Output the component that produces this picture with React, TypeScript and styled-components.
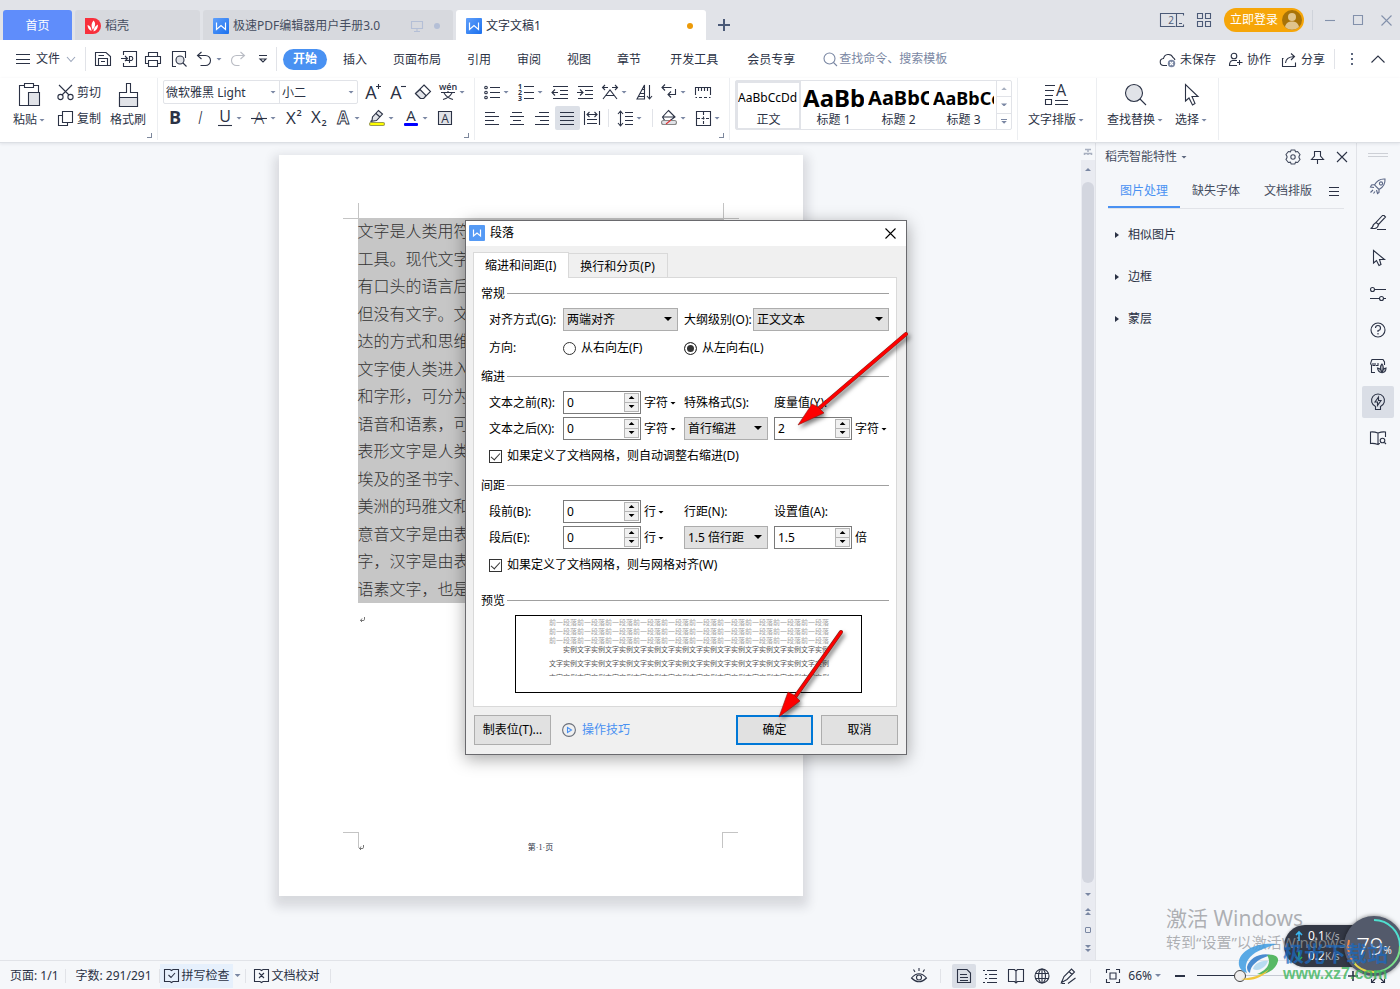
import React from "react";
import styled, { createGlobalStyle, css } from "styled-components";

const ink = "#2b3245";
const slate = "#7a87a3";
const rule = "#e1e3e8";
const blue = "#4991f2";
const uiFont = `"Noto Sans", "Noto Sans CJK SC", sans-serif`;

const GlobalStyle = createGlobalStyle`
  *, *::before, *::after { box-sizing: border-box; }
  body { margin: 0; background: #f5f7fa; }
  button, input, select { font: inherit; color: inherit; margin: 0; padding: 0; border: 0; background: none; border-radius: 0; }
  button { cursor: pointer; }
  svg { display: block; flex: none; overflow: visible; }
`;

const Shell = styled.div`
  position: relative;
  display: flex;
  flex-direction: column;
  min-height: 100vh;
  overflow: hidden;
  font: 12px/16px ${uiFont};
  color: ${ink};
  background: #f5f7fa;
  white-space: nowrap;
`;

/* ---------- icons ---------- */

type IconProps = { children: React.ReactNode; size?: number; w?: number; h?: number; color?: string };
const Icon = ({ children, size = 18, w, h, color = ink }: IconProps) => (
  <svg width={w ?? size} height={h ?? size} viewBox={`0 0 ${w ?? size} ${h ?? size}`} fill="none" stroke={color} strokeWidth="1.1" aria-hidden="true">
    {children}
  </svg>
);

const Glyph = ({ x = 9, y = 15, s = 17, b = 400, i = false, fill = ink, children }: any) => (
  <text x={x} y={y} textAnchor="middle" fontFamily="Open Sans, sans-serif" fontSize={s} fontWeight={b} fontStyle={i ? "italic" : "normal"} fill={fill} stroke="none">
    {children}
  </text>
);

const Caret = styled.span<{ $c?: string; $up?: boolean }>`
  flex: none;
  width: 6px;
  height: 3px;
  background: ${(p) => p.$c ?? slate};
  clip-path: ${(p) => (p.$up ? "polygon(0 100%, 100% 100%, 50% 0)" : "polygon(0 0, 100% 0, 50% 100%)")};
`;

const WriterLogo = () => (
  <svg width="16" height="16" viewBox="0 0 16 16" aria-hidden="true">
    <defs>
      <linearGradient id="wg" x1="0" y1="0" x2="1" y2="1">
        <stop offset="0" stopColor="#61a0fb" />
        <stop offset="1" stopColor="#1a70ee" />
      </linearGradient>
    </defs>
    <rect width="16" height="16" rx="1" fill="url(#wg)" />
    <path d="M3.500 4.500V11.500L8 7.500L12.500 11.500V4.500" fill="none" stroke="#fff" strokeWidth="1.200" />
  </svg>
);

/* ---------- title bar ---------- */

const TitleBar = styled.header`
  display: flex;
  align-items: flex-end;
  height: 40px;
  padding-left: 3px;
  background: #e1e3e8;
`;
const DocTab = styled.button<{ $kind: "home" | "idle" | "active"; $w: number }>`
  display: flex;
  align-items: center;
  gap: 4px;
  width: ${(p) => p.$w}px;
  height: 30px;
  margin-right: 3px;
  padding: 2px 10px 0;
  border-radius: 3px 3px 0 0;
  background: #d7d9de;
  color: #454d60;
  ${(p) => p.$kind === "home" && css`justify-content: center; background: #5f8dfb; color: #fff;`}
  ${(p) => p.$kind === "active" && css`background: #fff; color: ${ink};`}
`;
const Dot = styled.i<{ $c: string }>`
  width: 6px;
  height: 6px;
  margin: 0 3px 0 2px;
  border-radius: 3px;
  background: ${(p) => p.$c};
`;
const Spacer = styled.span`
  flex: 1;
`;
const NewTab = styled.button`
  height: 30px;
  padding: 0 9px;
`;
const WindowTools = styled.div`
  display: flex;
  align-items: center;
  align-self: stretch;
  margin-left: auto;
  padding-right: 8px;
`;
const Login = styled.button`
  display: flex;
  align-items: center;
  gap: 4px;
  height: 24px;
  margin: 0 8px 0 13px;
  padding: 0 2px 0 6px;
  border-radius: 12px;
  background: #f6a609;
  color: #fff;
`;
const WinButton = styled.button<{ $ml?: number }>`
  margin-left: ${(p) => p.$ml ?? 17}px;
`;
const VRule = styled.i<{ $h: number; $l?: number; $r?: number; $c?: string }>`
  flex: none;
  width: 1px;
  height: ${(p) => p.$h}px;
  margin: 0 ${(p) => p.$r ?? 0}px 0 ${(p) => p.$l ?? 0}px;
  background: ${(p) => p.$c ?? rule};
`;

const Title = () => (
  <TitleBar>
    <DocTab $kind="home" $w={69}>首页</DocTab>
    <DocTab $kind="idle" $w={125}>
      <svg width="16" height="16" viewBox="0 0 16 16" aria-hidden="true">
        <path d="M0 0H8A8 8 0 1 1 8 16H0Z" fill="#f8303c" />
        <path d="M8.500 2.500C11 5 10.500 8 7.800 12C6 8.500 6 5.500 8.500 2.500ZM2.500 7C5 7.500 6.500 9.500 6.500 13C4 12 2.700 10 2.500 7ZM13 6.500C13 10 11.500 12.500 8.500 13.500C8.700 10 10.200 7.800 13 6.500Z" fill="#fff" />
      </svg>
      稻壳
    </DocTab>
    <DocTab $kind="idle" $w={250}>
      <WriterLogo />
      极速PDF编辑器用户手册3.0
      <Spacer />
      <Icon w={12} h={12} color="#b4bfd6"><path d="M0.500 1.500H11.500V8.500H0.500ZM6 9V11M3 11.500H9" /></Icon>
      <VRule $h={0} />
      <Dot $c="#b4bfd6" />
    </DocTab>
    <DocTab $kind="active" $w={250}>
      <WriterLogo />
      文字文稿1
      <Spacer />
      <Dot $c="#ec9a08" />
    </DocTab>
    <NewTab aria-label="新建">
      <Icon size={12} color="#4b5a77"><path d="M6 0V12M0 6H12" strokeWidth="2" /></Icon>
    </NewTab>
    <WindowTools>
      <Icon w={24} h={14} color="#4b5a77">
        <path d="M23.500 2.500V0.500H0.500V13.500H15.500M16.500 0.500V13.500H23.500V11.500M19 10.500H22" />
        <Glyph x={11} y={11} s={10} b={400} fill="#4b5a77">2</Glyph>
      </Icon>
      <WinButton $ml={13} aria-label="应用">
        <Icon size={14} color="#4b5a77"><path d="M0.500 0.500H5.500V5.500H0.500ZM8.500 0.500H13.500V5.500H8.500ZM0.500 8.500H5.500V13.500H0.500ZM8.500 8.500H13.500V13.500H8.500Z" /></Icon>
      </WinButton>
      <Login>
        立即登录
        <svg width="20" height="20" viewBox="0 0 20 20" aria-hidden="true">
          <circle cx="10" cy="10" r="10" fill="#a87308" />
          <circle cx="10" cy="7" r="4" fill="#e0c48c" />
          <path d="M3 17C4 12.500 7 11.500 10 11.500S16 12.500 17 17A10 10 0 0 1 3 17Z" fill="#e0c48c" />
        </svg>
      </Login>
      <VRule $h={20} $c="#cfd3da" />
      <WinButton $ml={12} aria-label="最小化"><Icon size={10} color="#8391ab"><path d="M0 5.500H10" /></Icon></WinButton>
      <WinButton $ml={18} aria-label="最大化"><Icon size={10} color="#8391ab"><path d="M0.500 0.500H9.500V9.500H0.500Z" /></Icon></WinButton>
      <WinButton $ml={18} aria-label="关闭"><Icon size={11} color="#8391ab"><path d="M0.500 0.500L10.500 10.500M10.500 0.500L0.500 10.500" /></Icon></WinButton>
    </WindowTools>
  </TitleBar>
);

/* ---------- menu bar ---------- */

const MenuBar = styled.nav`
  display: flex;
  align-items: center;
  height: 38px;
  padding: 0 15px 0 16px;
  background: #fff;
`;
const FileButton = styled.button`
  display: flex;
  align-items: center;
  gap: 6px;
  margin-right: 9px;
`;
const QuickButton = styled.button<{ $ml: number }>`
  display: flex;
  align-items: center;
  gap: 4px;
  margin-left: ${(p) => p.$ml}px;
`;
const MenuTab = styled.button<{ $on?: boolean; $wide?: boolean }>`
  height: 21px;
  padding: 2px 13px 0;
  ${(p) => p.$wide && css`padding-left: 16px;`}
  ${(p) => p.$on && css`margin: 0 3px 0 6px; padding: 0 10px; border-radius: 11px; background: ${blue}; color: #fff; font-weight: 700;`}
`;
const Search = styled.label`
  display: flex;
  align-items: center;
  gap: 1px;
  margin-left: 15px;
  input { width: 160px; outline: 0; }
  input::placeholder { color: ${slate}; opacity: 1; }
`;
const CloudButton = styled.button<{ $mr: number }>`
  display: flex;
  align-items: center;
  gap: 4px;
  padding-top: 1px;
  margin-right: ${(p) => p.$mr}px;
`;

const Menu = () => (
  <MenuBar>
    <FileButton>
      <Icon size={14}><path d="M0 2.500H14M0 7.500H14M0 11.500H14" /></Icon>
      文件
      <Icon size={10} color="#9aa5ba"><path d="M1 3L5 7.500L9 3" /></Icon>
    </FileButton>
    <VRule $h={24} />
    <QuickButton $ml={9} aria-label="保存"><Icon size={16}><path d="M0.500 1.500H11L15.500 5.500V14.500H0.500ZM3.500 14V7.500H12.500V14M3.500 4.500H9M6 10.500H10" /></Icon></QuickButton>
    <QuickButton $ml={10} aria-label="输出为PDF"><Icon size={16}><path d="M2.500 4V0.500H15.500V15.500H2.500V12M0 7.500H6M4 5L6.500 7.500L4 10M8.500 12V5.500H10.500A2.200 2.200 0 0 1 10.500 9.500H5" /></Icon></QuickButton>
    <QuickButton $ml={8} aria-label="打印"><Icon size={16}><path d="M3.500 5V1.500H12.500V5M3 12.500H0.500V5.500H15.500V12.500H13M3.500 9.500H12.500V15.500H3.500Z" /></Icon></QuickButton>
    <QuickButton $ml={10} aria-label="打印预览"><Icon size={16}><path d="M5 15.500H1.500V0.500H14.500V7" /><circle cx="9" cy="9" r="4" fill="#e1e3e8" /><path d="M12 12L15.500 15.500" /></Icon></QuickButton>
    <QuickButton $ml={9} aria-label="撤销"><Icon size={16}><path d="M5.500 1L1.500 4.500L5.500 8M2 4.500H9.500A5 5 0 0 1 9.500 14.500H4.500" /></Icon><Caret /></QuickButton>
    <QuickButton $ml={8} aria-label="恢复"><Icon size={16} color="#b9bcc4"><path d="M10.500 1L14.500 4.500L10.500 8M14 4.500H6.500A5 5 0 0 0 6.500 14.500H9.500" /></Icon></QuickButton>
    <QuickButton $ml={12} aria-label="自定义快速访问"><Icon size={10}><path d="M1 1.500H9M2 5L5 8L8 5Z" /></Icon></QuickButton>
    <VRule $h={24} $l={8} />
    <MenuTab $on>开始</MenuTab>
    <MenuTab>插入</MenuTab>
    <MenuTab>页面布局</MenuTab>
    <MenuTab>引用</MenuTab>
    <MenuTab>审阅</MenuTab>
    <MenuTab>视图</MenuTab>
    <MenuTab>章节</MenuTab>
    <MenuTab $wide>开发工具</MenuTab>
    <MenuTab $wide>会员专享</MenuTab>
    <Search>
      <Icon size={15} color={slate}><circle cx="6.500" cy="6.500" r="5.500" /><path d="M10.500 10.500L14 14" /></Icon>
      <input aria-label="查找命令" placeholder="查找命令、搜索模板" />
    </Search>
    <Spacer />
    <CloudButton $mr={12}>
      <Icon size={16}><path d="M7 13.500H4A3.500 3.500 0 0 1 3.500 6.500A5 5 0 0 1 13 5.500A4 4 0 0 1 15 8" /><circle cx="11.500" cy="11.500" r="3.700" fill={slate} stroke="none" /><path d="M10 10L13 13M13 10L10 13" stroke="#fff" /></Icon>
      未保存
    </CloudButton>
    <CloudButton $mr={10}>
      <Icon size={15}><circle cx="6" cy="4" r="2.800" /><path d="M9 8.500H4.500Q1.500 9 1.500 13.500H9M9 10.500H14.500M11.500 8V13" /></Icon>
      协作
    </CloudButton>
    <CloudButton $mr={9}>
      <Icon size={16}><path d="M2.500 6.500H1.500V14.500H14.500V10.500M4.500 11Q5 5 13 4.500M10 1.500L13.500 4.500L10 8" /></Icon>
      分享
    </CloudButton>
    <VRule $h={20} />
    <QuickButton $ml={15} aria-label="更多"><Icon w={4} h={14}><path d="M1 2H3M1 7H3M1 12H3" strokeWidth="2" stroke="#5b667d" /></Icon></QuickButton>
    <QuickButton $ml={17} aria-label="收起功能区"><Icon w={14} h={8}><path d="M0.500 7.500L7 1L13.500 7.500" /></Icon></QuickButton>
  </MenuBar>
);

/* ---------- ribbon ---------- */

const Ribbon = styled.section`
  display: flex;
  height: 65px;
  background: #fff;
  border-bottom: 1px solid #dcdfe4;
  box-shadow: 0 1px 3px rgba(40, 50, 70, 0.1);
  z-index: 1;
`;
const Group = styled.div<{ $pl: number; $pr: number }>`
  position: relative;
  display: flex;
  height: 62px;
  padding: 2px ${(p) => p.$pr}px 0 ${(p) => p.$pl}px;
  border-right: 1px solid #eceef1;
`;
const Launcher = styled.i`
  position: absolute;
  right: 5px;
  bottom: 2px;
  width: 5px;
  height: 5px;
  border: solid #7c879c;
  border-width: 0 1px 1px 0;
`;
const Rows = styled.div<{ $l?: number }>`
  display: flex;
  flex-direction: column;
  gap: 2px;
  margin-left: ${(p) => p.$l ?? 0}px;
`;
const Row = styled.div`
  display: flex;
  align-items: center;
  height: 24px;
`;
const Tool = styled.button<{ $drop?: boolean; $on?: boolean }>`
  display: flex;
  align-items: center;
  gap: 2px;
  width: ${(p) => (p.$drop ? 34 : 25)}px;
  height: 24px;
  padding-left: 3px;
  border-radius: 2px;
  background: ${(p) => (p.$on ? "#dce0e7" : "none")};
`;
const BigTool = styled.button<{ $ml?: number }>`
  display: flex;
  flex-direction: column;
  align-items: center;
  gap: 5px;
  height: 48px;
  margin-left: ${(p) => p.$ml ?? 0}px;
  padding-top: 1px;
  span.label { display: flex; align-items: center; gap: 2px; }
`;
const TextTool = styled.button`
  display: flex;
  align-items: center;
  gap: 3px;
  height: 24px;
  padding-top: 1px;
`;
const FontBox = styled.div`
  display: flex;
  width: 195px;
  height: 24px;
  margin-right: 3px;
  border: 1px solid ${rule};
  border-radius: 2px;
`;
const FontField = styled.label<{ $w: number }>`
  display: flex;
  align-items: center;
  width: ${(p) => p.$w}px;
  padding: 0 3px 0 2px;
  & + & { border-left: 1px solid ${rule}; }
  select { flex: 1; min-width: 0; height: 22px; padding-top: 1px; appearance: none; outline: 0; }
`;

const tool = (name: string, art: React.ReactNode, drop = false, on = false) => (
  <Tool key={name} $drop={drop} $on={on} aria-label={name}>
    <Icon>{art}</Icon>
    {drop && <Caret />}
  </Tool>
);

const lines = (rows: [number, number, number][]) => rows.map(([a, b, y]) => `M${a} ${y}.5H${b}`).join("");

const Gallery = styled.div`
  display: flex;
  width: 277px;
  height: 50px;
  border: 1px solid ${rule};
  border-radius: 2px;
`;
const StyleCell = styled.button<{ $on?: boolean }>`
  display: flex;
  flex-direction: column;
  justify-content: flex-end;
  width: 65px;
  overflow: hidden;
  border: solid ${(p) => (p.$on ? rule : "transparent")};
  border-width: 2px 2px 1px;
  text-align: center;
`;
const Sample = styled.span<{ $s: number; $b?: boolean }>`
  display: block;
  width: 61px;
  height: 30px;
  overflow: hidden;
  font-size: ${(p) => p.$s}px;
  line-height: 30px;
  font-weight: ${(p) => (p.$b ? 700 : 400)};
  color: #000;
  text-align: left;
`;
const GalleryNav = styled.div`
  display: flex;
  flex-direction: column;
  flex: 1;
  border-left: 1px solid ${rule};
  button { flex: 1; display: grid; place-content: center; gap: 1px; }
  button + button { border-top: 1px solid ${rule}; }
`;
const Bar = styled.i`
  width: 6px;
  height: 1px;
  background: ${slate};
`;

const A = (p: any) => <Glyph {...p}>A</Glyph>;

const RibbonBar = () => (
  <Ribbon>
    <Group $pl={13} $pr={11}>
      <BigTool>
        <Icon size={26}>
          <path d="M9 4.500H3.500V24.500H12M17 4.500H22.500V11" /><path d="M8.500 2.500H17.500V6.500H8.500Z" />
          <path d="M12.500 11.500H23.500V24.500H12.500Z" fill="#e1e3e8" />
        </Icon>
        <span className="label">粘贴 <Caret /></span>
      </BigTool>
      <Rows $l={12}>
        <TextTool>
          <Icon size={17}><circle cx="3.500" cy="13" r="2.600" /><circle cx="13.500" cy="13" r="2.600" /><path d="M2 1L12 11M15 1L5 11" /></Icon>
          剪切
        </TextTool>
        <TextTool>
          <Icon size={17}><path d="M5.500 1.500H15.500V12.500H5.500ZM5 5.500H1.500V15.500H10.500V13" /></Icon>
          复制
        </TextTool>
      </Rows>
      <BigTool $ml={9}>
        <Icon size={26}>
          <path d="M11.500 2.500H15.500V11.500H22.500V25.500H4.500V11.500H11.500Z" /><path d="M4.500 16.500H22.500V25.500H4.500Z" fill="#e1e3e8" />
        </Icon>
        <span className="label">格式刷</span>
      </BigTool>
      <Launcher />
    </Group>

    <Group $pl={5} $pr={4}>
      <Rows>
        <Row>
          <FontBox>
            <FontField $w={115}>
              <select aria-label="字体"><option>微软雅黑 Light</option></select>
              <Caret />
            </FontField>
            <FontField $w={78}>
              <select aria-label="字号"><option>小二</option></select>
              <Caret />
            </FontField>
          </FontBox>
          {tool("增大字号", <><A x={7} y={16} s={18} /><path d="M12 3.500H17M14.500 1V6" /></>)}
          {tool("减小字号", <><A x={7} y={16} s={18} /><path d="M12 3.500H17" /></>)}
          {tool("清除格式", <><path d="M10 2L16.500 8.500L9.500 15.500H6.500L1.500 10.500Z" /><path d="M6 6.500L12 12.500L9.500 15.500H6.500L1.500 10.500Z" fill="#e1e3e8" /></>)}
          {tool("拼音指南", <><Glyph y={7} s={9} b={600}>wén</Glyph><path d="M2 9.500H16M9 8V10M5 10Q8 15 14 16.500M13 10Q10 15 4 16.500" /></>, true)}
        </Row>
        <Row>
          {tool("加粗", <Glyph s={18} b={700} y={15}>B</Glyph>)}
          {tool("倾斜", <Glyph s={18} b={300} i y={15}>I</Glyph>)}
          {tool("下划线", <><Glyph s={16} y={13}>U</Glyph><path d="M2 16.500H16" /></>, true)}
          {tool("删除线", <><A s={17} b={300} y={15} /><path d="M1 9.500H17" /></>, true)}
          {tool("上标", <><Glyph x={7} y={15} s={17}>X</Glyph><Glyph x={15} y={7} s={9} b={600}>2</Glyph></>)}
          {tool("下标", <><Glyph x={7} y={14} s={17}>X</Glyph><Glyph x={15} y={17} s={9} b={600}>2</Glyph></>)}
          {tool("文字效果", <text x="9" y="15" textAnchor="middle" fontFamily="Open Sans, sans-serif" fontWeight="700" fontSize="17" fill="#fff" stroke={ink} strokeWidth="0.900">A</text>, true)}
          {tool("突出显示", <><path d="M4 11.500L4.500 8L10.500 1.500L14.500 5L8.500 11.500L2.500 12.500ZM8 4.500L12 8" fill="#e1e3e8" /><rect x="1.500" y="13.500" width="15" height="3" rx="1.500" fill="#ff0" stroke="#9c9c50" /></>, true)}
          {tool("字体颜色", <><A s={15} y={12} b={400} /><rect x="2" y="14" width="14" height="3" rx="1" fill="#00f" stroke="none" /></>, true)}
          {tool("字符底纹", <><path d="M2.500 2.500H15.500V15.500H2.500Z" fill="#e1e3e8" /><A s={12} y={14} b={400} /></>)}
        </Row>
      </Rows>
      <Launcher />
    </Group>

    <Group $pl={5} $pr={4}>
      <Rows>
        <Row>
          {tool("项目符号", <><circle cx="3" cy="4.500" r="1.300" /><circle cx="3" cy="9.500" r="1.300" /><circle cx="3" cy="14.500" r="1.300" /><path d={lines([[7, 17, 4], [7, 17, 9], [7, 17, 14]])} /></>, true)}
          {tool("编号", <><Glyph x={3} y={6} s={7} b={700}>1</Glyph><Glyph x={3} y={12} s={7} b={700}>2</Glyph><Glyph x={3} y={18} s={7} b={700}>3</Glyph><path d={lines([[7, 17, 3], [7, 17, 9], [7, 17, 15]])} /></>, true)}
          {tool("减少缩进", <path d={lines([[2, 17, 3], [9, 17, 7], [9, 17, 11], [2, 17, 15]]) + "M1 9.500H7M4 6.500L1 9.500L4 12.500"} />)}
          {tool("增加缩进", <path d={lines([[2, 17, 3], [9, 17, 7], [9, 17, 11], [2, 17, 15]]) + "M1 9.500H7M4 6.500L7 9.500L4 12.500"} />)}
          {tool("中文版式", <path d="M1.500 4.500H7M4 2L1.500 4.500L4 7M11 4.500H16.500M14 2L16.500 4.500L14 7M2 16L9 7L16 16M5 12.500H13" />, true)}
          {tool("排序", <><path d="M2 16L9.500 2V16ZM5 10.500H9.500M7 6.500H9.500M3 13.500H9.500M14.500 2V16M12 13L14.500 16L17 13" /></>)}
          {tool("显示段落标记", <path d="M11.500 4.500H2M5 1.500L2 4.500L5 7.500M15.500 6V11.500H8M11 8.500L8 11.500L11 14.500" />, true)}
          {tool("标尺", <path d="M1.500 12V4.500H16.500V12M4.500 5V8M7.500 5V8M10.500 5V8M13.500 5V8M1.500 14.500H3M5 14.500H8M10 14.500H13M15 14.500H16.500" />)}
        </Row>
        <Row>
          {tool("左对齐", <path d={lines([[2, 12, 3], [2, 16, 7], [2, 11, 11], [2, 16, 15]])} />)}
          {tool("居中对齐", <path d={lines([[4, 14, 3], [2, 16, 7], [5, 13, 11], [2, 16, 15]])} />)}
          {tool("右对齐", <path d={lines([[6, 16, 3], [2, 16, 7], [7, 16, 11], [2, 16, 15]])} />)}
          {tool("两端对齐", <path d={lines([[2, 16, 3], [2, 16, 7], [2, 16, 11], [2, 16, 15]])} />, false, true)}
          {tool("分散对齐", <path d="M1.500 2V16M16.500 2V16M4 10.500H14M4 14.500H14M3.500 5.500H14.500M6.500 3L4 5.500L6.500 8M11.500 3L14 5.500L11.500 8" />)}
          <VRule $h={18} $l={3} $r={4} />
          {tool("行距", <path d={lines([[9, 17, 3], [9, 17, 7], [9, 17, 11], [9, 17, 15]]) + "M4.500 2V17M2 5L4.500 2L7 5M2 14L4.500 17L7 14"} />, true)}
          <VRule $h={18} $l={5} $r={4} />
          {tool("底纹颜色", <><path d="M8.500 1.500L15 8L9.500 12H5L2.500 8ZM2.500 8H15" /><rect x="1.500" y="11.500" width="15" height="4" rx="2" fill="#e1e3e8" stroke="#888" /><path d="M6 15L11 11" stroke="#e03030" /></>, true)}
          {tool("边框", <><path d="M2.500 2.500H16.500V16.500H2.500Z" /><path d="M9.500 3V16M3 9.500H16" strokeDasharray="3 1.500" /></>, true)}
        </Row>
      </Rows>
      <Launcher />
    </Group>

    <Group $pl={5} $pr={5}>
      <Gallery>
        <StyleCell $on><Sample $s={12}>AaBbCcDd</Sample>正文</StyleCell>
        <StyleCell><Sample $s={24} $b>AaBb</Sample>标题 1</StyleCell>
        <StyleCell><Sample $s={20} $b>AaBbC</Sample>标题 2</StyleCell>
        <StyleCell><Sample $s={18} $b>AaBbCc</Sample>标题 3</StyleCell>
        <GalleryNav>
          <button aria-label="上一行"><Caret $up $c="#a8b0c0" /></button>
          <button aria-label="下一行"><Caret /></button>
          <button aria-label="更多样式"><Bar /><Caret /></button>
        </GalleryNav>
      </Gallery>
    </Group>
    <Group $pl={10} $pr={12}>
      <BigTool>
        <Icon size={26}><path d="M2 4.500H12M2 9.500H11M2 14.500H10M2.500 18.500H8.500V23.500H2.500ZM12 19.500H25M12 23.500H25" /><A x={18} y={15} s={16} /></Icon>
        <span className="label">文字排版 <Caret /></span>
      </BigTool>
    </Group>
    <Group $pl={10} $pr={11}>
      <BigTool>
        <Icon size={26}><circle cx="12" cy="12" r="8.500" fill="#e1e3e8" /><path d="M18 18L24 24" /></Icon>
        <span className="label">查找替换 <Caret /></span>
      </BigTool>
      <BigTool $ml={12}>
        <Icon size={26}><path d="M7.500 3.500V20L11 17L14.500 24L17 22.500L14 15.500H20Z" /></Icon>
        <span className="label">选择 <Caret /></span>
      </BigTool>
    </Group>
  </Ribbon>
);

/* ---------- document ---------- */

const Workspace = styled.main`
  display: flex;
  flex: 1;
`;
const Canvas = styled.div`
  display: flex;
  flex: 1;
  justify-content: center;
  align-items: flex-start;
  padding: 12px 0;
`;
const Paper = styled.article`
  display: flex;
  flex-direction: column;
  width: 524px;
  min-height: 741px;
  padding: 48px 64px 42px;
  background: #fff;
  box-shadow: 0 6px 10px 5px rgba(40, 45, 55, 0.14);
`;
const MarkRow = styled.div`
  display: flex;
  justify-content: space-between;
`;
const CropMark = styled.i<{ $sides: string }>`
  flex: none;
  width: 16px;
  height: 16px;
  border: solid #c4c4c4;
  border-width: ${(p) => p.$sides};
`;
const Selection = styled.div`
  display: grid;
  grid-auto-rows: 1fr;
  align-items: center;
  height: 385px;
  margin: -1px 15px 0;
  background: #c6c6c6;
  color: #333;
  font-size: 16px;
  line-height: 24px;
  font-weight: 300;
  p { margin: 0 0 1px; }
`;
const ParaEnd = styled.div`
  margin: 14px 0 0 17px;
`;
const FootRow = styled(MarkRow)`
  height: 22px;
  margin-top: auto;
`;
const FootText = styled.span`
  align-self: flex-end;
  font: 8px/12px "Liberation Serif", "Noto Sans CJK SC", serif;
`;
const FootLeft = styled.div`
  display: flex;
  align-items: flex-end;
  width: 16px;
  svg { margin-bottom: 4px; }
  i { align-self: flex-start; }
`;
const Return = () => <Icon w={5} h={5} color="#666"><path d="M4.500 0V2.500Q4.500 3.500 3 3.500H0.500M2 1.500L0.500 3.500L2 5" strokeWidth="0.900" /></Icon>;

const bodyLines = [
  "文字是人类用符", "工具。现代文字", "有口头的语言后", "但没有文字。文", "达的方式和思维", "文字使人类进入", "和字形，可分为",
  "语音和语素，可", "表形文字是人类", "埃及的圣书字、", "美洲的玛雅文和", "意音文字是由表", "字，汉字是由表", "语素文字，也是",
];

const Scroll = styled.div`
  display: flex;
  flex-direction: column;
  align-items: center;
  width: 14px;
  background: #e9ebf1;
`;
const ScrollHead = styled.div`
  display: grid;
  place-content: center;
  width: 100%;
  height: 17px;
  margin-bottom: 8px;
  background: #f5f7fa;
`;
const Thumb = styled.div`
  flex: 1;
  width: 12px;
  margin: 11px 0 10px;
  border-radius: 6px;
  background: #d3d6df;
`;
const ScrollFoot = styled.div`
  display: flex;
  flex-direction: column;
  align-items: center;
  gap: 12px;
  padding-bottom: 8px;
  span.pair { display: grid; gap: 1px; }
`;
const Square = styled.i`
  width: 6px;
  height: 6px;
  border: 1px solid ${slate};
  border-radius: 1px;
`;

/* ---------- side panel ---------- */

const Side = styled.aside`
  width: 261px;
  border-left: 1px solid ${rule};
  color: #454d60;
`;
const SideHead = styled.div`
  display: flex;
  align-items: center;
  gap: 9px;
  height: 28px;
  padding: 0 6px 0 9px;
  button { display: flex; align-items: center; gap: 4px; }
`;
const SideTabs = styled.div`
  display: flex;
  align-items: center;
  height: 38px;
  margin: 0 12px;
  border-bottom: 1px solid ${rule};
`;
const SideTab = styled.button<{ $on?: boolean }>`
  width: 72px;
  height: 36px;
  padding-top: 4px;
  border-bottom: 2px solid ${(p) => (p.$on ? blue : "transparent")};
  color: ${(p) => (p.$on ? blue : "inherit")};
`;
const SideItems = styled.div`
  padding: 5px 0 0 19px;
  button { display: flex; align-items: center; gap: 9px; height: 42px; color: ${ink}; }
`;
const RightCaret = styled.i`
  width: 4px;
  height: 6px;
  background: ${ink};
  clip-path: polygon(0 0, 100% 50%, 0 100%);
`;
const Rail = styled.div`
  display: flex;
  flex-direction: column;
  align-items: center;
  gap: 4px;
  width: 44px;
  padding: 10px 2px 0 0;
  border-left: 1px solid ${rule};
`;
const Grip = styled.i`
  width: 20px;
  height: 4px;
  margin-bottom: 9px;
  border: solid #cdd0d6;
  border-width: 1px 0;
`;
const RailButton = styled.button<{ $on?: boolean }>`
  display: grid;
  place-content: center;
  width: 32px;
  height: 32px;
  border-radius: 2px;
  background: ${(p) => (p.$on ? "#dadee6" : "none")};
`;

const railArt: [string, React.ReactNode][] = [
  ["助手", <g stroke="#5b6786"><path d="M5.500 8Q9 1.500 16 2Q16.500 9 10 12.500L5.500 8ZM6 7.500L2.500 8L1.500 10L5 10.500M10 12.500V15.500L8.500 16.500L7.500 13M4 13L1.500 15.500M6 14.500L4.500 16.500" /><circle cx="12" cy="6.500" r="1.600" /></g>],
  ["样式", <path d="M15 2.500L16.500 4L9.500 11.500L7 9.500L13.500 2.500ZM7 9.500L4.500 11.500Q3.500 15 1.500 15.500H6Q9 15 9.500 11.500M8 16.500H17" />],
  ["选择", <path d="M4.500 1.500V14L7.500 11.500L10 16.500L12 15.500L10.500 10.500H15.500Z" />],
  ["设置", <><circle cx="3.500" cy="4.500" r="2" /><path d="M5.500 4.500H17M1 13.500H10.500M14.500 13.500H17" /><circle cx="12.500" cy="13.500" r="2" /></>],
  ["帮助", <><circle cx="9" cy="9" r="7" /><path d="M6.500 7A2.500 2.500 0 1 1 9 9.500V11M9 12V13.500" /></>],
  ["稻壳", <><path d="M6 15.500H2.500V8M2.500 8Q1 7 2 5L3 2.500H14L15.500 5V8M4 6V8.500H6V6M7 8.500H9V6" /><path d="M13 7Q10 10 13 15.500Q15.500 10 13 7ZM8.500 11Q9 15.500 13 15.500Q12 11.500 8.500 11ZM17 11Q17 15.500 13 15.500Q14 11.500 17 11Z" fill={ink} fillOpacity=".3" /></>],
  ["智能特性", <path d="M6.500 13.500A6.500 6.500 0 1 1 11.500 13.500V16.500H6.500ZM9.500 4L6 9H8.500V12.500L12 7.500H9.500Z" />],
  ["阅读", <><path d="M9 15V4Q5 2.500 1.500 3V14.500Q5 14 9 15.500Q10 14.500 11 14.500M9 4Q13 2.500 16.500 3V8" /><circle cx="13.500" cy="11.500" r="2.300" /><path d="M15.500 13.500L17 15" /></>],
];

const SidePanel = () => (
  <Side>
    <SideHead>
      <button>稻壳智能特性 <Caret $c="#5b667d" /></button>
      <Spacer />
      <button aria-label="设置"><Icon size={16} color="#454d60"><path d="M6.200 1H9.800L10.600 2.800L12.600 2.500L15 5.500L14 7.500V8.500L15 10.500L12.600 13.500L10.600 13.200L9.800 15H6.200L5.400 13.200L3.400 13.500L1 10.500L2 8.500V7.500L1 5.500L3.400 2.500L5.400 2.800Z" /><circle cx="8" cy="8" r="2.200" /></Icon></button>
      <button aria-label="固定"><Icon size={15}><path d="M4.500 1.500H10.500V6L13.500 9.500H1.500L4.500 6ZM7.500 10V14" /></Icon></button>
      <button aria-label="关闭"><Icon size={16}><path d="M3 3L13 13M13 3L3 13" /></Icon></button>
    </SideHead>
    <SideTabs>
      <SideTab $on>图片处理</SideTab>
      <SideTab>缺失字体</SideTab>
      <SideTab>文档排版</SideTab>
      <QuickButton $ml={5} aria-label="更多"><Icon size={10}><path d="M0 2.500H10M0 6.500H10M0 10.500H10" /></Icon></QuickButton>
    </SideTabs>
    <SideItems>
      {["相似图片", "边框", "蒙层"].map((t) => (
        <button key={t}><RightCaret />{t}</button>
      ))}
    </SideItems>
  </Side>
);

/* ---------- paragraph dialog ---------- */

const Dialog = styled.div`
  position: absolute;
  top: 220px;
  left: 465px;
  z-index: 2;
  width: 442px;
  border: 1px solid #6a6a6e;
  background: #f0f0f0;
  color: #000;
  box-shadow: 0 4px 16px rgba(0, 0, 0, 0.35);
`;
const DialogTitle = styled.div`
  display: flex;
  align-items: center;
  gap: 5px;
  height: 25px;
  padding: 0 10px 1px 3px;
  background: #fff;
`;
const TabStrip = styled.div`
  display: flex;
  align-items: flex-end;
  height: 31px;
  padding-left: 7px;
`;
const DialogTab = styled.button<{ $on?: boolean }>`
  position: relative;
  height: ${(p) => (p.$on ? 26 : 24)}px;
  padding: 2px 12px 0 11px;
  border: 1px solid #d9d9d9;
  border-bottom: 0;
  background: ${(p) => (p.$on ? "#fff" : "#f0f0f0")};
  ${(p) => p.$on && css`margin: 0 -1px -1px 0; padding-bottom: 1px; z-index: 1;`}
`;
const Pane = styled.div`
  margin: 0 9px 0 7px;
  padding: 1px 7px 13px;
  border: 1px solid #d9d9d9;
  background: #fff;
`;
const Heading = styled.h3<{ $last?: boolean }>`
  display: flex;
  align-items: center;
  gap: 2px;
  height: 16px;
  margin: ${(p) => (p.$last ? "12px 0 7px" : "6px 0 5px")};
  padding-top: 2px;
  font: inherit;
  line-height: 16px;
  &::after { content: ""; flex: 1; height: 1px; margin-bottom: 2px; background: #a0a0a0; }
`;
const FormRow = styled.div<{ $cols?: "wide" | "pair"; $tall?: boolean }>`
  display: grid;
  grid-template-columns: ${(p) => (p.$cols === "wide" ? "74px 121px 69px 1fr" : p.$cols === "pair" ? "74px 121px 1fr" : "74px 81px 40px 90px 81px 1fr")};
  align-items: center;
  height: ${(p) => (p.$tall ? 30 : 26)}px;
  padding-left: 8px;
  & > label, & > span, & > button { padding-top: 2px; }
`;
const Choice = styled.label<{ $inset?: boolean }>`
  display: flex;
  align-items: center;
  gap: 5px;
  height: 30px;
  padding-left: ${(p) => (p.$inset ? 8 : 0)}px;
`;
const Check = styled.input`
  appearance: none;
  width: 13px;
  height: 13px;
  border: 1px solid #333;
  background: #fff;
  &:checked::after {
    content: "";
    display: block;
    width: 9px;
    height: 5px;
    margin: 2px 0 0 1px;
    border: solid #333;
    border-width: 0 0 1px 1px;
    transform: rotate(-48deg);
  }
`;
const Radio = styled.input`
  appearance: none;
  width: 13px;
  height: 13px;
  border: 1px solid #333;
  border-radius: 7px;
  background: #fff;
  &:checked { box-shadow: inset 0 0 0 2px #fff; background: #333; }
`;
const SelectBox = styled.div<{ $w?: number }>`
  display: flex;
  align-items: center;
  width: ${(p) => (p.$w ? `${p.$w}px` : "100%")};
  height: 23px;
  padding: 0 5px 0 3px;
  border: 1px solid #adadad;
  background: #e1e1e1;
  select { flex: 1; min-width: 0; height: 21px; padding-top: 1px; appearance: none; outline: 0; }
`;
const BlackCaret = styled.i<{ $s?: boolean; $up?: boolean }>`
  flex: none;
  width: ${(p) => (p.$s ? 6 : 8)}px;
  height: ${(p) => (p.$s ? 3 : 4)}px;
  background: #000;
  clip-path: ${(p) => (p.$up ? "polygon(0 100%, 100% 100%, 50% 0)" : "polygon(0 0, 100% 0, 50% 100%)")};
`;
const NumberBox = styled.div`
  display: flex;
  width: 78px;
  height: 23px;
  padding: 1px;
  border: 1px solid #7a7a7a;
  background: #fff;
  input { flex: 1; min-width: 0; padding: 1px 0 0 2px; outline: 0; }
`;
const Spin = styled.div`
  display: flex;
  flex-direction: column;
  width: 15px;
  border: 1px solid #b5b5b5;
  background: #f0f0f0;
  button { flex: 1; display: grid; place-content: center; }
  button + button { border-top: 1px solid #b5b5b5; }
`;
const Unit = styled.button`
  display: flex;
  align-items: center;
  gap: 2px;
  justify-self: start;
`;
const Preview = styled.div`
  width: 347px;
  height: 78px;
  margin-left: 34px;
  padding: 2px 0 0 33px;
  border: 1px solid #000;
  color: #555;
  font: 7px/9px "Noto Sans CJK SC", sans-serif;
  p { margin: 0; }
`;
const PreviewGrey = styled.div`
  color: #a5a5a5;
`;
const PreviewBody = styled.div`
  height: 34px;
  overflow: hidden;
  line-height: 14px;
  margin-top: -3px;
  p:first-child { padding-left: 14px; }
`;
const DialogFoot = styled.div`
  display: flex;
  align-items: center;
  padding: 8px 8px 9px;
`;
const DialogButton = styled.button<{ $primary?: boolean }>`
  width: 77px;
  height: 30px;
  margin-left: ${(p) => (p.$primary ? 0 : 8)}px;
  border: ${(p) => (p.$primary ? "2px solid #0078d7" : "1px solid #adadad")};
  background: #e1e1e1;
  &:first-child { margin-left: 0; }
`;
const TipsLink = styled.a`
  display: flex;
  align-items: center;
  gap: 6px;
  margin: 0 auto 0 11px;
  color: ${blue};
  text-decoration: none;
`;
const Arrows = styled.svg`
  position: absolute;
  top: -1px;
  left: -1px;
  pointer-events: none;
  filter: drop-shadow(2px 3px 2px rgba(0, 0, 0, 0.5));
`;

const NumberField = ({ id, value }: { id: string; value: string }) => (
  <NumberBox>
    <input id={id} type="text" defaultValue={value} />
    <Spin>
      <button aria-label="增加"><BlackCaret $s $up /></button>
      <button aria-label="减少"><BlackCaret $s /></button>
    </Spin>
  </NumberBox>
);
const Choose = ({ id, value, w }: { id: string; value: string; w?: number }) => (
  <SelectBox $w={w}>
    <select id={id}><option>{value}</option></select>
    <BlackCaret />
  </SelectBox>
);

const ParagraphDialog = () => (
  <Dialog role="dialog" aria-label="段落">
    <DialogTitle>
      <svg width="16" height="16" viewBox="0 0 16 16" aria-hidden="true">
        <rect width="16" height="16" rx="1" fill="#559af5" />
        <path d="M4.500 4.500V11L8 8L11.500 11V4.500" fill="none" stroke="#fff" strokeWidth="1.200" />
      </svg>
      段落
      <Spacer />
      <button aria-label="关闭"><Icon size={11} color="#000"><path d="M0.500 0.500L10.500 10.500M10.500 0.500L0.500 10.500" /></Icon></button>
    </DialogTitle>
    <TabStrip>
      <DialogTab $on>缩进和间距(I)</DialogTab>
      <DialogTab>换行和分页(P)</DialogTab>
    </TabStrip>
    <Pane>
      <Heading>常规</Heading>
      <FormRow $cols="wide">
        <label htmlFor="align">对齐方式(G):</label>
        <Choose id="align" value="两端对齐" w={115} />
        <label htmlFor="outline">大纲级别(O):</label>
        <Choose id="outline" value="正文文本" />
      </FormRow>
      <FormRow $cols="pair" $tall>
        <span>方向:</span>
        <Choice><Radio type="radio" name="dir" />从右向左(F)</Choice>
        <Choice><Radio type="radio" name="dir" defaultChecked />从左向右(L)</Choice>
      </FormRow>
      <Heading>缩进</Heading>
      <FormRow>
        <label htmlFor="before">文本之前(R):</label>
        <NumberField id="before" value="0" />
        <Unit>字符<BlackCaret $s /></Unit>
        <label htmlFor="special">特殊格式(S):</label>
        <label htmlFor="measure">度量值(Y):</label>
      </FormRow>
      <FormRow>
        <label htmlFor="after">文本之后(X):</label>
        <NumberField id="after" value="0" />
        <Unit>字符<BlackCaret $s /></Unit>
        <Choose id="special" value="首行缩进" w={84} />
        <NumberField id="measure" value="2" />
        <Unit>字符<BlackCaret $s /></Unit>
      </FormRow>
      <Choice $inset><Check type="checkbox" defaultChecked />如果定义了文档网格，则自动调整右缩进(D)</Choice>
      <Heading>间距</Heading>
      <FormRow>
        <label htmlFor="above">段前(B):</label>
        <NumberField id="above" value="0" />
        <Unit>行<BlackCaret $s /></Unit>
        <label htmlFor="leading">行距(N):</label>
        <label htmlFor="multiple">设置值(A):</label>
      </FormRow>
      <FormRow>
        <label htmlFor="below">段后(E):</label>
        <NumberField id="below" value="0" />
        <Unit>行<BlackCaret $s /></Unit>
        <Choose id="leading" value="1.5 倍行距" w={84} />
        <NumberField id="multiple" value="1.5" />
        <span>倍</span>
      </FormRow>
      <Choice $inset><Check type="checkbox" defaultChecked />如果定义了文档网格，则与网格对齐(W)</Choice>
      <Heading $last>预览</Heading>
      <Preview>
        <PreviewGrey>
          {[0, 1, 2].map((n) => <p key={n}>{"前一段落".repeat(10)}</p>)}
        </PreviewGrey>
        <PreviewBody>
          <p>{"实例文字".repeat(9)}实例</p>
          <p>{"文字实例".repeat(10)}</p>
          <p>{"文字实例".repeat(10)}</p>
        </PreviewBody>
      </Preview>
    </Pane>
    <DialogFoot>
      <DialogButton>制表位(T)...</DialogButton>
      <TipsLink href="#tips">
        <Icon size={14} color={blue}><circle cx="7" cy="7" r="6.400" stroke="#6a6f7a" /><path d="M5.500 4.500L9.500 7L5.500 9.500Z" /></Icon>
        操作技巧
      </TipsLink>
      <DialogButton $primary>确定</DialogButton>
      <DialogButton>取消</DialogButton>
    </DialogFoot>
    <Arrows width="442" height="535" viewBox="0 0 442 535" aria-hidden="true">
      <path d="M441 114L352 190" stroke="#7d2a20" strokeWidth="4" strokeLinecap="round" />
      <path d="M441 114L352 190" stroke="#fd0000" strokeWidth="3" strokeLinecap="round" />
      <path d="M333 205L347 184L353 187L359 193Z" fill="#fd0000" stroke="#8a1a12" strokeWidth="0.600" />
      <path d="M376 412L328 480" stroke="#7d2a20" strokeWidth="4" strokeLinecap="round" />
      <path d="M376 412L328 480" stroke="#fd0000" strokeWidth="3" strokeLinecap="round" />
      <path d="M314 497L323 472L329 475L335 481Z" fill="#fd0000" stroke="#8a1a12" strokeWidth="0.600" />
    </Arrows>
  </Dialog>
);

/* ---------- status bar ---------- */

const StatusBar = styled.footer`
  display: flex;
  align-items: center;
  height: 29px;
  padding: 1px 15px 0 10px;
  border-top: 1px solid ${rule};
`;
const StatusItem = styled.button<{ $on?: boolean; $ml?: number }>`
  display: flex;
  align-items: center;
  gap: 3px;
  height: 24px;
  margin-left: ${(p) => p.$ml ?? 0}px;
  ${(p) => p.$on && css`padding: 0 3px 0 4px; background: #e6f0fc;`}
`;
const ViewButton = styled.button<{ $on?: boolean }>`
  display: grid;
  place-content: center;
  width: 24px;
  height: 24px;
  margin-right: 2px;
  border-radius: 2px;
  background: ${(p) => (p.$on ? "#dadee6" : "none")};
`;
const Slider = styled.input`
  appearance: none;
  width: 150px;
  height: 14px;
  && { margin: 0 1px 0 12px; }
  && { background: linear-gradient(${ink}, ${ink}) 0 50% / 40px 1px no-repeat, linear-gradient(#c5c9d2, #c5c9d2) 0 50% / 100% 1px no-repeat; }
  &::-webkit-slider-thumb { appearance: none; width: 12px; height: 12px; border: 1px solid #444; border-radius: 6px; background: #f0eeee; }
`;

const Status = () => (
  <StatusBar>
    <span>页面: 1/1</span>
    <VRule $h={14} $l={6} $r={6} />
    <StatusItem $ml={4}>字数: 291/291</StatusItem>
    <VRule $h={14} $l={7} />
    <StatusItem $on>
      <Icon size={15}><path d="M6 1.500H0.500V13.500H6L7.500 14.500L9 13.500H14.500V1.500H9L7.500 2.500ZM4.500 7L7 9.500L11 5" /></Icon>
      拼写检查
    </StatusItem>
    <StatusItem $ml={2} aria-label="拼写选项"><Caret /></StatusItem>
    <VRule $h={14} $l={4} $r={4} />
    <StatusItem $ml={4}>
      <Icon size={15}><path d="M6 1.500H0.500V13.500H6L7.500 14.500L9 13.500H14.500V1.500H9L7.500 2.500ZM5 5L10 10M10 5L5 10" /></Icon>
      文档校对
    </StatusItem>
    <VRule $h={14} $l={10} />
    <Spacer />
    <Icon><path d="M1.500 11Q9 2.500 16.500 11Q9 18.500 1.500 11ZM9 1V4M3.500 2.500L5 5M14.500 2.500L13 5" /><circle cx="9" cy="10.500" r="2.500" /></Icon>
    <VRule $h={14} $l={12} $r={11} />
    <ViewButton $on aria-label="页面视图"><Icon size={16}><path d="M1.500 1.500H11L14.500 5V14.500H1.500ZM4 6.500H11M4 9.500H12M4 12.500H12" /></Icon></ViewButton>
    <ViewButton aria-label="大纲"><Icon size={16}><path d="M1 2.500H3M5 2.500H15M3 6.500H5M7 6.500H15M3 10.500H5M7 10.500H15M1 14.500H3M5 14.500H15" /></Icon></ViewButton>
    <ViewButton aria-label="阅读版式"><Icon size={16}><path d="M8 14V3L6.500 1.500H0.500V13.500H6.500L8 15L9.500 13.500H15.500V1.500H9.500L8 3" /></Icon></ViewButton>
    <ViewButton aria-label="Web版式"><Icon size={16}><circle cx="8" cy="8" r="7" /><ellipse cx="8" cy="8" rx="3.500" ry="7" /><path d="M1.500 5.500H14.500M1.500 10.500H14.500M8 1V15" /></Icon></ViewButton>
    <ViewButton aria-label="写作模式"><Icon size={16}><path d="M1.500 14.500L4 8.500L11.500 1L14.500 4L7 11.500ZM9 3.500L12 6.500M1.500 15.500H5M8 15.500L15.500 10" /></Icon></ViewButton>
    <VRule $h={14} $l={8} $r={15} />
    <Icon size={14}><path d="M0.500 4V0.500H4M10 0.500H13.500V4M13.500 10V13.500H10M4 13.500H0.500V10M4 4H10V10H4Z" /></Icon>
    <StatusItem $ml={8}>66% <Caret /></StatusItem>
    <StatusItem $ml={14} aria-label="缩小"><Icon size={10}><path d="M0 5H10" strokeWidth="2" /></Icon></StatusItem>
    <Slider type="range" aria-label="显示比例" min={0} max={100} defaultValue={27} />
    <StatusItem aria-label="放大"><Icon size={10}><path d="M0 5H10M5 0V10" strokeWidth="1.600" /></Icon></StatusItem>
    <StatusItem $ml={13} aria-label="全屏"><Icon size={14}><path d="M0.500 4V0.500H4M10 0.500H13.500V4M13.500 10V13.500H10M4 13.500H0.500V10M0.500 0.500L5 5M13.500 0.500L9 5M13.500 13.500L9 9M0.500 13.500L5 9" /></Icon></StatusItem>
  </StatusBar>
);

/* ---------- desktop overlays ---------- */

const Activate = styled.div`
  position: absolute;
  right: 34px;
  bottom: 37px;
  width: 200px;
  color: rgba(150, 152, 156, 0.75);
  font-size: 15px;
  line-height: 20px;
  pointer-events: none;
  z-index: 4;
  strong { display: block; font-weight: 400; font-size: 21px; line-height: 28px; }
`;
const NetWidget = styled.div`
  position: absolute;
  right: 0;
  bottom: 22px;
  z-index: 3;
  width: 116px;
  height: 42px;
  padding: 1px 0 0 11px;
  border-radius: 21px;
  background: #333845;
  box-shadow: 0 0 3px rgba(0, 0, 0, 0.3);
  color: #fff;
  line-height: 20px;
  small { font-size: 10px; color: #aeb2bb; }
`;
const Speed = styled.div`
  display: flex;
  align-items: center;
  height: 20px;
  svg { margin-right: 5px; }
`;
const Gauge = styled.div`
  position: absolute;
  right: -4px;
  top: -9px;
  display: flex;
  align-items: center;
  justify-content: center;
  width: 60px;
  height: 60px;
  border-radius: 30px;
  background: #535a6b;
  box-shadow: 0 0 4px rgba(0, 0, 0, 0.5);
  font-size: 24px;
  font-weight: 300;
  svg { position: absolute; inset: 0; }
  small { margin-top: 8px; font-size: 10px; font-weight: 400; color: #fff; }
`;
const SiteMark = styled.div`
  position: absolute;
  right: 12px;
  bottom: 6px;
  z-index: 5;
  display: flex;
  align-items: center;
  pointer-events: none;
`;
const SiteText = styled.div`
  display: grid;
  font: 700 21px/25px "Noto Sans CJK SC", sans-serif;
  color: rgba(28, 105, 190, 0.75);
  span { font: 700 16px/18px "Liberation Sans", Arial, sans-serif; color: rgba(60, 180, 90, 0.8); }
`;

const Overlays = () => (
  <>
    <NetWidget>
      <Speed><Icon w={8} h={10} color="#38b6f0"><path d="M4 10V1M1 4L4 1L7 4" strokeWidth="1.600" /></Icon>0.1<small>K/s</small></Speed>
      <Speed><Icon w={8} h={10} color="#2fb457"><path d="M4 0V9M1 6L4 9L7 6" strokeWidth="1.600" /></Icon>0.2<small>K/s</small></Speed>
      <Gauge>
        <svg width="60" height="60" viewBox="0 0 60 60" fill="none" strokeWidth="2" aria-hidden="true">
          <path d="M30 4A26 26 0 0 1 56 30" stroke="#4fe0d0" />
          <path d="M56 30A26 26 0 0 1 30 56" stroke="#7be08a" />
          <path d="M30 56A26 26 0 0 1 8 44" stroke="#e6d84a" />
          <path d="M8 44A26 26 0 0 1 5 24" stroke="#f08a4a" />
        </svg>
        79<small>%</small>
      </Gauge>
    </NetWidget>
    <Activate>
      <strong>激活 Windows</strong>
      转到“设置”以激活Windows。
    </Activate>
    <SiteMark>
      <svg width="46" height="40" viewBox="0 0 46 40" aria-hidden="true">
        <path d="M40 2C20 0 4 8 2 19C1 25 4 29 10 31C6 22 12 12 26 7C31 5 36 3 40 2Z" fill="#3d9be0" fillOpacity=".85" />
        <path d="M34 13C24 10 12 16 10 25C10 28 11 30 13 31C13 24 20 17 34 13Z" fill="#2a78c8" fillOpacity=".85" />
        <path d="M30 13C36 12 42 14 41 19C39 28 28 34 20 32C30 28 35 21 30 13Z" fill="#57b865" />
        <path d="M4 37C14 40 26 36 32 27C26 33 14 36 4 37Z" fill="#f0c53a" />
        <path d="M16 27C17 22 24 18 31 19C29 25 22 30 16 27Z" fill="#8fc8ea" fillOpacity=".6" />
      </svg>
      <SiteText>极光下载站<span>www.xz7.com</span></SiteText>
    </SiteMark>
  </>
);

export default function App() {
  return (
    <Shell>
      <GlobalStyle />
      <Title />
      <Menu />
      <RibbonBar />
      <Workspace>
        <Canvas>
          <Paper>
            <MarkRow>
              <CropMark $sides="0 1px 1px 0" />
              <CropMark $sides="0 0 1px 1px" />
            </MarkRow>
            <Selection>
              {bodyLines.map((t) => <p key={t}>{t}</p>)}
            </Selection>
            <ParaEnd><Return /></ParaEnd>
            <FootRow>
              <FootLeft><CropMark $sides="1px 1px 0 0" /><Return /></FootLeft>
              <FootText>第·1·页</FootText>
              <CropMark $sides="1px 0 0 1px" />
            </FootRow>
          </Paper>
        </Canvas>
        <Scroll>
          <ScrollHead><Icon w={8} h={8} color="#a8b0c0"><path d="M1 1.500H7M4 1V4M0.500 7V5.500H7.500V7M4 5V7" strokeWidth="1.500" /></Icon></ScrollHead>
          <Caret $up />
          <Thumb />
          <ScrollFoot>
            <Caret />
            <span className="pair"><Caret $up /><Caret $up /></span>
            <Square />
            <span className="pair"><Caret /><Caret /></span>
          </ScrollFoot>
        </Scroll>
        <SidePanel />
        <Rail>
          <Grip />
          {railArt.map(([name, art]) => (
            <RailButton key={name} $on={name === "智能特性"} aria-label={name}><Icon>{art}</Icon></RailButton>
          ))}
        </Rail>
      </Workspace>
      <Status />
      <ParagraphDialog />
      <Overlays />
    </Shell>
  );
}
